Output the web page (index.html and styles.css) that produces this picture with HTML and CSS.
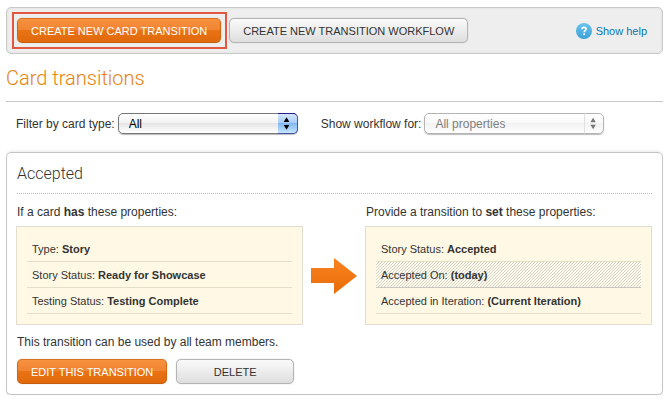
FILE: index.html
```html
<!DOCTYPE html>
<html lang="en">
<head>
<meta charset="utf-8">
<title>Card transitions</title>
<link rel="stylesheet" href="styles.css">
</head>
<body>
<div class="toolbar">
  <span class="highlight"><button class="button primary" type="button">CREATE NEW CARD TRANSITION</button></span>
  <button class="button" type="button">CREATE NEW TRANSITION WORKFLOW</button>
  <a class="help" href="#">
    <svg width="16" height="16" viewBox="0 0 16 16" aria-hidden="true">
      <defs><linearGradient id="help-fill" x2="0" y2="1"><stop stop-color="#6dc4ec"/><stop offset="1" stop-color="#38a0db"/></linearGradient></defs>
      <circle cx="8" cy="8" r="8" fill="url(#help-fill)"/>
      <path d="M6 6.2C6 4.7 6.9 4.3 8 4.3c1.3 0 2.1.7 2.1 1.7C10.100 7.400 8.200 7.300 8.200 9.300" fill="none" stroke="#fff" stroke-width="1.700"/>
      <rect x="7.200" y="10.300" width="1.900" height="1.800" fill="#fff"/>
    </svg>
    <span>Show help</span>
  </a>
</div>
<main>
  <h1>Card transitions</h1>
  <form class="filters">
    <div class="field">
      <label for="card-type">Filter by card type:</label>
      <span class="select">
        <select id="card-type"><option>All</option></select>
        <svg class="stepper" width="20" height="19" viewBox="0 0 20 19" aria-hidden="true"><path d="M9 3l3 5H6zM9 16l3-5H6z"/></svg>
      </span>
    </div>
    <div class="field">
      <label for="workflow">Show workflow for:</label>
      <span class="select">
        <select id="workflow" disabled><option>All properties</option></select>
        <svg class="stepper" width="20" height="19" viewBox="0 0 20 19" aria-hidden="true"><path d="M9 3l3 5H6zM9 16l3-5H6z"/></svg>
      </span>
    </div>
  </form>
  <section class="card">
    <h2>Accepted</h2>
    <div class="transition">
      <div class="side">
        <p>If a card <b>has</b> these properties:</p>
        <ul class="properties">
          <li>Type: <b>Story</b></li>
          <li>Story Status: <b>Ready for Showcase</b></li>
          <li>Testing Status: <b>Testing Complete</b></li>
        </ul>
      </div>
      <svg class="arrow" width="46" height="36" viewBox="0 0 46 36" aria-hidden="true">
        <defs><linearGradient id="arrow-fill" x2="0" y2="1"><stop stop-color="#fa8320"/><stop offset="1" stop-color="#e86c08"/></linearGradient></defs>
        <path d="M0 10h23V0l23 18-23 18V25H0z" fill="url(#arrow-fill)"/>
      </svg>
      <div class="side">
        <p>Provide a transition to <b>set</b> these properties:</p>
        <ul class="properties">
          <li>Story Status: <b>Accepted</b></li>
          <li class="hatched">Accepted On: <b>(today)</b></li>
          <li>Accepted in Iteration: <b>(Current Iteration)</b></li>
        </ul>
      </div>
    </div>
    <p class="note">This transition can be used by all team members.</p>
    <div class="actions">
      <button class="button primary" type="button">EDIT THIS TRANSITION</button>
      <button class="button wide" type="button">DELETE</button>
    </div>
  </section>
</main>
</body>
</html>
```
FILE: styles.css
```css
* { box-sizing: border-box; }
body {
  margin: 7px 6px;
  background: #fff;
  color: #333;
  font: 12px/16px "Liberation Sans", Arial, sans-serif;
}
h1, h2, p, ul { margin: 0; padding: 0; }

.toolbar {
  display: flex;
  align-items: center;
  gap: 2px;
  height: 47px;
  padding: 0 15px 0 5px;
  border: 1px solid #c8c8c8;
  border-radius: 5px;
  background: #eee;
  box-shadow: inset 0 0 3px #ddd;
}
.highlight {
  display: flex;
  padding: 4px 4px 4px 3px;
  border: 2px solid #e2573f;
}
.button {
  height: 25px;
  padding: 0 13px;
  border: 1px solid #b4b4b4;
  border-radius: 5px;
  background: linear-gradient(#fafafa, #dedede);
  box-shadow: 0 0 1px #aaa;
  color: #333;
  font: 11px/20px "Liberation Sans", Arial, sans-serif;
  white-space: nowrap;
}
.primary {
  border-color: #db7222 #d5660f #c65d0c;
  background: linear-gradient(#f7923f, #f08331 50%, #e97314 50%, #e0690b);
  color: #fff;
}
.wide { min-width: 118px; }
.help {
  display: flex;
  align-items: center;
  gap: 4px;
  margin-left: auto;
  color: #0b76b7;
  font-size: 11px;
  text-decoration: none;
}

h1 {
  height: 48px;
  padding-top: 12px;
  border-bottom: 1px solid #c8c8c8;
  color: #e8820c;
  font-family: Roboto, "Liberation Sans", sans-serif;
  font-size: 20px;
  font-weight: 300;
  line-height: 24px;
}
.filters {
  display: flex;
  gap: 23px;
  padding: 11px 10px 18px;
}
.field { display: flex; align-items: center; gap: 3px; white-space: nowrap; }
.select { position: relative; display: flex; width: 180px; }
select {
  appearance: none;
  width: 100%;
  height: 21px;
  padding: 0 24px 0 10px;
  border: 1px solid #777;
  border-radius: 5px;
  background: linear-gradient(#fff, #f3f3f3 45%, #e6e6e6 50%, #fff);
  box-shadow: 0 1px 1px #bbb;
  color: #000;
  font: 12px/16px "Liberation Sans", Arial, sans-serif;
}
.stepper {
  position: absolute;
  top: 0;
  right: 0;
  height: 21px;
  border: 1px solid #4654a8;
  border-top-color: #24208c;
  border-left: 0;
  border-radius: 0 5px 5px 0;
  background: linear-gradient(#d6e6fb, #a9cdf7 45%, #83b8f3 50%, #c5e6ff);
  pointer-events: none;
}
select:disabled {
  border-color: #b4b4b4;
  background: linear-gradient(#fff, #f9f9f9 45%, #f2f2f2 50%, #fff);
  color: #808080;
  opacity: 1;
}
select:disabled + .stepper {
  border: 1px solid transparent;
  border-left-color: #e0e0e0;
  border-radius: 0;
  background: none;
  fill: #777;
}

.card {
  padding: 10px 10px 10px 9px;
  border: 1px solid #c4c4c4;
  border-radius: 5px;
  box-shadow: 0 1px 5px #ccc;
}
h2 {
  height: 31px;
  margin-left: 1px;
  border-bottom: 1px dotted #bbb;
  font-family: Roboto, "Liberation Sans", sans-serif;
  font-size: 16px;
  font-weight: 300;
  line-height: 22px;
}
.transition { display: flex; gap: 8px; padding-top: 10px; }
.side { flex: 1; min-width: 0; }
.side p { padding-left: 1px; }
.properties {
  margin-top: 6px;
  padding: 9px 10px 10px;
  border: 1px solid #e2dfd2;
  background: #fff8e4;
  font-size: 11px;
  list-style: none;
}
.properties li {
  padding: 5px 5px 4px;
  border-bottom: 1px solid #e6dfc8;
}
.properties .hatched {
  border-bottom-color: #c8c8c0;
  background: linear-gradient(135deg, #fffbec 35%, #d6d4c8 50%, #fffbec 65%) 0 0 / 3px 3px;
}
.arrow { align-self: center; margin-top: 22px; }
.note { margin: 9px 0 9px 1px; }
.actions { display: flex; gap: 9px; margin-left: 1px; }
```
